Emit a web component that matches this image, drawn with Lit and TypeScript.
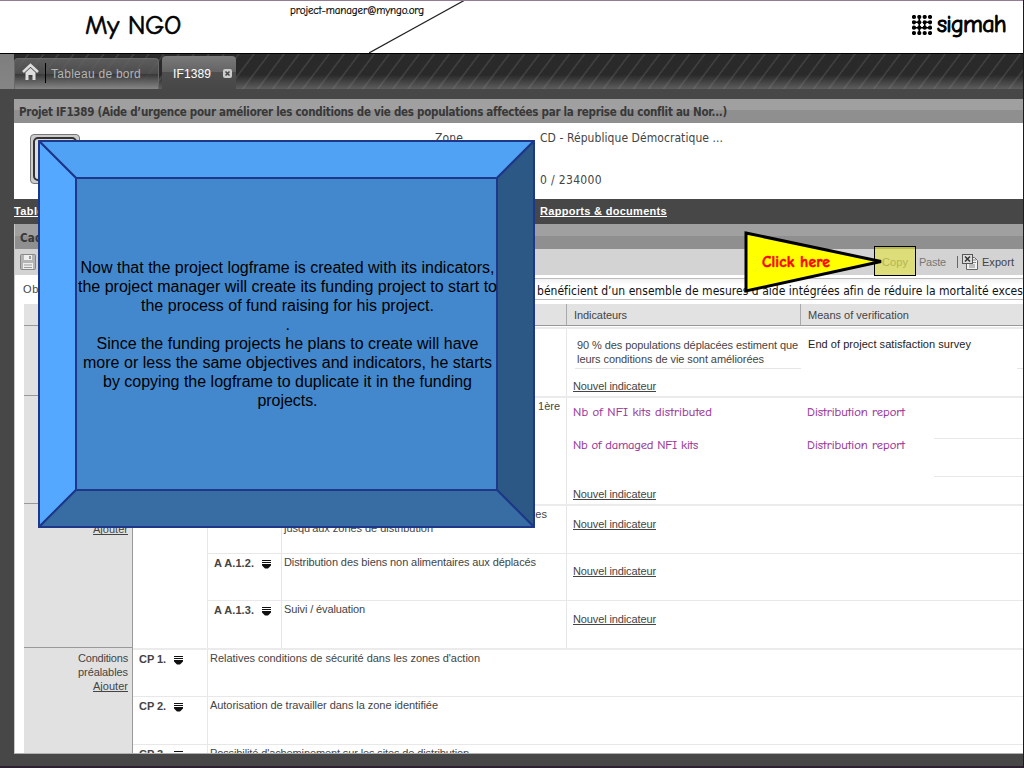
import { LitElement, html, css, svg } from "lit";
import { customElement, property } from "lit/decorators.js";

/** One line of text whose letter spacing is computed so that it spans a given width. */
@customElement("fit-text")
class FitText extends LitElement {
  @property({ type: Number }) w = 0;
  @property() text = "";
  static styles = css`
    :host { display: block; white-space: pre; }
    .run { display: inline-block; vertical-align: top; }
    :host(.u) .run { text-decoration: underline; text-underline-offset: 1px; text-decoration-thickness: 1px; text-decoration-skip-ink: none; }
  `;
  render() { return html`<span class="run">${this.text}</span>`; }
  updated() {
    const s = this.renderRoot.querySelector(".run") as HTMLElement;
    s.style.letterSpacing = "0px";
    const d = (this.w - s.getBoundingClientRect().width) / this.text.length;
    s.style.letterSpacing = d.toFixed(3) + "px";
  }
}

const t = (text: string, w: number, cls = "") => html`<fit-text class=${cls} .text=${text} .w=${w}></fit-text>`;

const menuIcon = html`<svg class="menu" width="9" height="9" viewBox="0 0 9 9"><path d="M0 0h9v1H0zM0 2h9v1H0zM0 4h9v1.500L6 8.500H3L0 5.500z" fill="#111"/></svg>`;

const logo = () => {
  const c = [2, 7.3, 12.7, 18];
  return svg`<g fill="#000">${c.map(x => c.map(y => svg`<circle cx=${x} cy=${y} r="2.1"/>`))}</g>
  <g stroke="#000" stroke-width="1.6"><path d="M7.3 2v16M12.7 7v6M0 7.3h8M12 7.300h6M2 12.7h16"/></g>`;
};

@customElement("app-root")
class AppRoot extends LitElement {
  static styles = css`
    :host { display: block; position: relative; width: 1024px; height: 768px; overflow: hidden; background: #474747;
      font: 11px/14px "Liberation Sans", Arial, sans-serif; color: #444; }
    * { box-sizing: border-box; }
    .page { width: 1024px; height: 768px; display: flex; flex-direction: column; border-right: 1px solid #2d0e2f; border-bottom: 2px solid #2d2030; overflow: hidden; }
    .page > * { flex: none; }
    .comic { font-family: "Comic Sans MS", "Comic Neue", "Lato", sans-serif; }
    .brand { height: 54px; display: flex; background: #fff; border-top: 1px solid #947d94; border-bottom: 1px solid #000; color: #000; }
    .ngo { font-size: 27px; line-height: 32px; margin: 9px 0 0 85px; width: 205px; -webkit-text-stroke: .6px #000; }
    .mail { font-size: 11px; line-height: 14px; margin-top: 3px; width: 79px; -webkit-text-stroke: .2px #000; }
    .slash { width: 100px; height: 52px; }
    .logo { display: flex; margin: 13px 0 0 443px; gap: 5px; }
    .logo svg { margin-top: 1px; }
    .sig { font-size: 24px; line-height: 21px; color: #000; -webkit-text-stroke: 1px #000; font-family: "Comic Sans MS", "Comic Neue", "Lato", sans-serif; }
    .tabs { height: 35px; display: flex; padding: 2px 0 0 14px; gap: 3px;
      background: linear-gradient(#7e7e7e, #858585) 0 0 / 14px 35px no-repeat,
        linear-gradient(rgba(40,40,40,.2) 60%, rgba(135,135,135,.55)),
        repeating-linear-gradient(127deg, #2a2a2a 0 9.5px, #444 10.5px 11.5px, #2a2a2a 12px); }
    .tab { display: flex; height: 33px; border-radius: 4px 4px 0 0; align-items: flex-start; }
    .home { width: 145px; margin-top: 2px; height: 31px; background: linear-gradient(rgba(105,105,105,.8), rgba(85,85,85,.8) 48%, rgba(60,60,60,.85) 52%, #858585); border: 1px solid #686868; border-bottom: 0; padding: 3px 0 0 7px; }
    .home .bar { width: 1px; height: 20px; background: #000; margin: 1px 5px 0 6px; }
    .home svg { margin-top: 1px; }
    .home fit-text { font-size: 12px; color: #b4b4b4; margin-top: 5px; }
    .cur { width: 74px; background: linear-gradient(#7a7a7a, #646464 48%, #4e4e4e 50%, #474747); padding: 0 0 0 11px; }
    .cur fit-text { font-size: 12px; color: #fff; margin-top: 11px; width: 50px; }
    .cur svg { margin-top: 13px; }
    .bar2 { background: linear-gradient(#a0a0a0 46%, #8f8f8f 48%); font-family: "DejaVu Sans Condensed", "DejaVu Sans", sans-serif; font-weight: bold; font-size: 11.5px; color: #383838; }
    .title { margin: 10px 0 0 14px; height: 24px; padding: 6px 0 0 5px; }
    .info { margin-left: 14px; height: 76px; background: #fff; display: flex; padding-left: 16px; font-family: "DejaVu Sans Condensed", "DejaVu Sans", sans-serif; font-size: 12px; }
    .badge { width: 50px; height: 50px; margin-top: 11px; border: 1px solid #777; border-radius: 4px; background: #ccc; padding: 2px; }
    .badge i { display: block; height: 44px; border: 2px solid #333; border-radius: 5px; background: #ddd; }
    .zone { margin: 8px 0 0 355px; width: 105px; }
    .vals { display: flex; flex-direction: column; gap: 28px; margin-top: 8px; }
    .nav { height: 25px; display: flex; padding: 5px 0 0 14px; color: #fff; font-weight: bold; }
    .nav span { width: 526px; }
    .panel { margin-left: 14px; height: 530px; background: #fff; border-left: 1px solid #c8c8c8; border-bottom: 1px solid #b0b0b0; overflow: hidden; }
    .ph { height: 25px; padding: 7px 0 0 5px; }
    .tool { height: 26px; background: #d3d3d3; display: flex; padding-left: 5px; color: #555; }
    .tool fit-text { margin-top: 6px; }
    .tool > svg { margin-top: 5px; }
    .copy { margin-left: 846px; width: 37px; color: #888; }
    .paste { width: 38px; color: #777; }
    .sep { width: 1px; height: 12px; background: #666; margin: 7px 4px 0 0; }
    .exp { margin-left: 4px; color: #444; }
    .obj { height: 29px; display: flex; padding-left: 8px; }
    .obj span { width: 106px; padding-top: 7px; }
    .field { margin-top: 3px; width: 894px; height: 22px; border: solid #bbb; border-width: 1px 0; padding: 4px 0 0 408px; background: linear-gradient(#f2f2f2, #fff 30%); font: 12px/16px "DejaVu Sans Condensed", "DejaVu Sans", sans-serif; color: #111; }
    .th { margin-left: 9px; height: 22px; display: flex; background: #e2e2e2; border-bottom: 1px solid #999; color: #444; }
    .th div { padding: 4px 0 0 7px; border-right: 1px solid #aaa; width: 234px; height: 21px; }
    .th div:first-child { width: 543px; }
    .th div:last-child { border: 0; width: 222px; }
    .tb { margin-left: 9px; display: flex; height: 427px; }
    .left { width: 109px; background: #e1e1e1; border-right: 1px solid #999; flex: none; }
    .sec { border-bottom: 1px solid #999; display: flex; flex-direction: column; align-items: flex-end; padding-right: 4px; }
    .s1 { height: 70px; } .s2 { height: 108px; } .s3 { height: 144px; padding-top: 18px; } .s4 { height: 110px; padding-top: 3px; }
    .right { flex: 1; padding-top: 1px; }
    .g { display: flex; border-top: 2px solid #ebebeb; }
    .g1 { height: 69px; } .g2 { height: 108px; } .g3 { height: 144px; } .g4 { height: 112px; }
    .lead { width: 434px; border-right: 1px solid #e6e6e6; display: flex; justify-content: flex-end; padding: 1px 6px 0 0; flex: none; }
    .ind { width: 234px; padding-left: 6px; flex: none; }
    .box { border-bottom: 1px solid #e6e6e6; margin-left: 2px; height: 40px; padding: 9px 0 0 2px; width: 226px; }
    .new { margin-top: 10px; }
    .mv { padding: 8px 0 0 7px; color: #222; }
    .stub { width: 6px; height: 40px; border-bottom: 1px solid #e6e6e6; margin-left: auto; }
    .purple { color: #973097; font-size: 12.5px; -webkit-text-stroke: .15px #973097; }
    .k { padding-top: 7px; display: flex; flex-direction: column; gap: 19px; }
    .g2 .new { margin-top: 35px; }
    .g2 .mv { padding: 7px 0 0 6px; color: #973097; width: 133px; }
    .lines { flex: 1; height: 79px; border-bottom: 1px solid #e8e8e8; }
    .lines i { display: block; height: 41px; border-bottom: 1px solid #e8e8e8; }
    .gap { width: 75px; border-right: 1px solid #e6e6e6; }
    .col { flex: 1; }
    .sub { display: flex; height: 47px; }
    .sub + .sub { border-top: 1px solid #e8e8e8; height: 48px; }
    .g3 .sub:nth-child(2) { height: 47px; }
    .g4 .sub:first-child { height: 46px; }
    .code { width: 75px; padding: 2px 0 0 6px; display: flex; gap: 8px; border-right: 1px solid #e6e6e6; font-weight: bold; flex: none; }
    .g3 .code { width: 74px; }
    .menu { margin-top: 4px; }
    .desc { width: 285px; border-right: 1px solid #e6e6e6; padding: 1px 0 0 2px; flex: none; }
    .free { padding: 1px 0 0 2px; }
    .n3 { padding: 11px 0 0 6px; }
    .sub:nth-child(2) .n3 { padding-top: 10px; }
    .call { position: absolute; left: 38px; top: 140px; width: 497px; height: 388px; }
    .call svg { position: absolute; left: 0; top: 0; }
    .msg { position: absolute; left: 39px; top: 118px; width: 421px; display: flex; flex-direction: column; align-items: center; font-size: 16px; line-height: 19px; color: #000; }
    .arrow { position: absolute; left: 740px; top: 226px; width: 180px; height: 72px; }
    .hot { position: absolute; left: 134px; top: 20px; width: 42px; height: 30px; background: rgba(232,232,20,.47); border: 1px solid #000; }
    .arrow svg { position: absolute; left: 0; top: 0; }
    .click { position: absolute; left: 22px; top: 27px; color: #f00; font-weight: bold; font-size: 15.5px; line-height: 18px; -webkit-text-stroke: .5px #f00; }
  `;
  render() {
    const nouvel = t("Nouvel indicateur", 83, "u");
    return html`
    <div class="page">
      <div class="brand">
        <div class="ngo comic">${t("My NGO", 96)}</div>
        <div class="mail comic">${t("project-manager@myngo.org", 134)}</div>
        <svg class="slash" viewBox="0 0 100 52"><path d="M0 52L96 -1" stroke="#222" stroke-width="1.2"/></svg>
        <div class="logo"><svg width="20" height="20" viewBox="0 0 20 20">${logo()}</svg>${t("sigmah", 69, "sig")}</div>
      </div>
      <div class="tabs">
        <div class="tab home">
          <svg width="17" height="18" viewBox="0 0 17 18"><path d="M1 9L8.500 2L16 9" fill="none" stroke="#ddd" stroke-width="2.500"/><path d="M3.500 9.500L8.500 5L13.500 9.500V17H10.500V12H6.500V17H3.500z" fill="#ddd"/></svg>
          <div class="bar"></div>${t("Tableau de bord", 90)}
        </div>
        <div class="tab cur">${t("IF1389", 38)}
          <svg width="9" height="9" viewBox="0 0 9 9"><rect width="9" height="9" rx="2" fill="#ccc"/><path d="M2.500 2.500l4 4M6.500 2.500l-4 4" stroke="#444" stroke-width="1.500"/></svg></div>
      </div>
      <div class="title bar2">${t("Projet IF1389 (Aide d’urgence pour améliorer les conditions de vie des populations affectées par la reprise du conflit au Nor...)", 707)}</div>
      <div class="info"><div class="badge"><i></i></div><div class="zone">${t("Zone", 28)}</div>
        <div class="vals">${t("CD - République Démocratique ...", 183)}${t("0 / 234000", 62)}</div></div>
      <div class="nav"><span>${t("Tableau de bord", 90, "u")}</span>${t("Rapports & documents", 127, "u")}</div>
      <div class="panel">
        <div class="ph bar2">${t("Cadre logique", 84)}</div>
        <div class="tool">
          <svg width="16" height="17" viewBox="0 0 16 17"><rect x=".5" y=".5" width="15" height="15" rx="1" fill="#b4b4b4" stroke="#888"/><path d="M4 1h8v5H4zM3 9h10v6H3z" fill="#eee"/><path d="M4 11h8M4 13.500h8" stroke="#999"/><path d="M9 2h2v3H9z" fill="#999"/></svg>
          <div class="copy">${t("Copy", 26)}</div><div class="paste">${t("Paste", 27)}</div><div class="sep"></div>
          <svg width="16" height="17" viewBox="0 0 16 17"><path d="M4.500 3.500h8l3 3v9h-11z" fill="#f2f2f2" stroke="#666"/><path d="M7 11h6M7 13h6M11 6h3M11 8.500h3" stroke="#888"/><rect x=".5" y=".5" width="10" height="9" fill="#ddd" stroke="#555"/><path d="M3 2.500l5 5M8 2.500l-5 5" stroke="#333" stroke-width="1.500"/></svg>
          <div class="exp">${t("Export", 32)}</div>
        </div>
        <div class="obj"><span>${t("Objectif", 42)}</span><div class="field">${t("bénéficient d’un ensemble de mesures d’aide intégrées afin de réduire la mortalité exces", 486)}</div></div>
        <div class="th"><div></div><div>${t("Indicateurs", 53)}</div><div>${t("Means of verification", 101)}</div></div>
        <div class="tb">
          <div class="left">
            <div class="sec s1"></div><div class="sec s2"></div>
            <div class="sec s3">${t("Ajouter", 35, "u")}</div>
            <div class="sec s4">${t("Conditions", 50)}${t("préalables", 50)}${t("Ajouter", 35, "u")}</div>
          </div>
          <div class="right">
            <div class="g g1"><div class="lead"></div>
              <div class="ind"><div class="box">${t("90 % des populations déplacées estiment que", 221)}${t("leurs conditions de vie sont améliorées", 187)}</div><div class="new">${nouvel}</div></div>
              <div class="mv">${t("End of project satisfaction survey", 163)}</div><div class="stub"></div></div>
            <div class="g g2"><div class="lead">${t("1ère", 22)}</div>
              <div class="ind"><div class="k comic purple">${t("Nb of NFI kits distributed", 139)}${t("Nb of damaged NFI kits", 125)}</div><div class="new">${nouvel}</div></div>
              <div class="mv k comic purple">${t("Distribution report", 98)}${t("Distribution report", 98)}</div><div class="lines"><i></i></div></div>
            <div class="g g3"><div class="gap"></div><div class="col">
              <div class="sub"><div class="code"></div><div class="desc">${t("Acheminement des biens et produits non alimentaires", 263)}${t("jusqu'aux zones de distribution", 149)}</div><div class="n3">${nouvel}</div></div>
              <div class="sub"><div class="code">${t("A A.1.2.", 40)}${menuIcon}</div><div class="desc">${t("Distribution des biens non alimentaires aux déplacés", 252)}</div><div class="n3">${nouvel}</div></div>
              <div class="sub"><div class="code">${t("A A.1.3.", 40)}${menuIcon}</div><div class="desc">${t("Suivi / évaluation", 81)}</div><div class="n3">${nouvel}</div></div>
            </div></div>
            <div class="g g4"><div class="col">
              <div class="sub"><div class="code">${t("CP 1.", 27)}${menuIcon}</div><div class="free">${t("Relatives conditions de sécurité dans les zones d'action", 270)}</div></div>
              <div class="sub"><div class="code">${t("CP 2.", 27)}${menuIcon}</div><div class="free">${t("Autorisation de travailler dans la zone identifiée", 228)}</div></div>
              <div class="sub"><div class="code">${t("CP 3.", 27)}${menuIcon}</div><div class="free">${t("Possibilité d'acheminement sur les sites de distribution", 259)}</div></div>
            </div></div>
          </div>
        </div>
      </div>
    </div>
    <div class="call">
      <svg width="497" height="388" viewBox="0 0 497 388"><g stroke="#1e3788" stroke-width="2" stroke-linejoin="round">
        <path d="M1 1H496L459 38H38z" fill="#50a2f5"/><path d="M1 1L38 38V350L1 387z" fill="#54a8ff"/>
        <path d="M496 1V387L459 350V38z" fill="#2b5885"/><path d="M1 387L38 350H459L496 387z" fill="#376da3"/>
        <path d="M38 38H459V350H38z" fill="#4388cd"/></g></svg>
      <div class="msg">
        ${t("Now that the project logframe is created with its indicators,", 414)}${t("the project manager will create its funding project to start to", 419)}${t("the process of fund raising for his project.", 293)}${t(".", 4)}${t("Since the funding projects he plans to create will have", 382)}${t("more or less the same objectives and indicators, he starts", 409)}${t("by copying the logframe to duplicate it in the funding", 369)}${t("projects.", 60)}
      </div>
    </div>
    <div class="arrow"><div class="hot"></div>
      <svg width="180" height="72" viewBox="0 0 180 72"><path d="M6 7L141 35.500L6 65z" fill="#ff0" stroke="#000" stroke-width="3"/></svg>
      <div class="click comic">${t("Click here", 68)}</div></div>`;
  }
}
